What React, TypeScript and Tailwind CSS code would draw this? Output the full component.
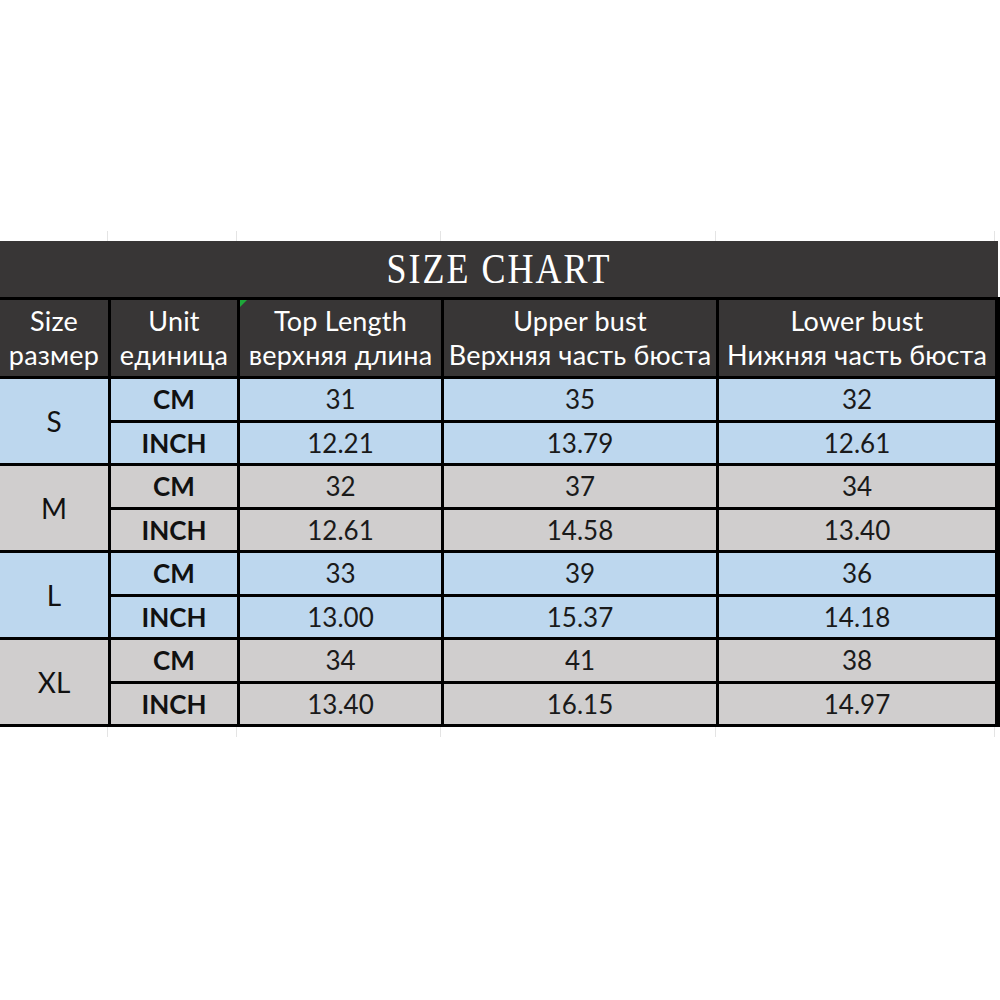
import React from 'react';

const sizes = [
  { size: 'S', bg: 'bg-[#bdd7ee]', cm: ['31', '35', '32'], inch: ['12.21', '13.79', '12.61'] },
  { size: 'M', bg: 'bg-[#d0cece]', cm: ['32', '37', '34'], inch: ['12.61', '14.58', '13.40'] },
  { size: 'L', bg: 'bg-[#bdd7ee]', cm: ['33', '39', '36'], inch: ['13.00', '15.37', '14.18'] },
  { size: 'XL', bg: 'bg-[#d0cece]', cm: ['34', '41', '38'], inch: ['13.40', '16.15', '14.97'] },
];

const headers = [
  ['Size', 'размер'],
  ['Unit', 'единица'],
  ['Top Length', 'верхняя длина'],
  ['Upper bust', 'Верхняя часть бюста'],
  ['Lower bust', 'Нижняя часть бюста'],
];

const cols = 'grid grid-cols-[108px_126px_201px_272px_276px] gap-x-[3px]';

export default function App() {
  return (
    <div className="w-[1000px] h-[1000px] bg-white font-['Lato','Liberation_Sans',sans-serif]">
      <div className="h-[231px]" />

      {/* faint sheet gridlines above */}
      <div className={`${cols} h-[10px] w-[998px]`}>
        {headers.map((_, i) => (
          <div key={i} className="border-r border-[#e4e4e4]" />
        ))}
      </div>

      <div className="w-[998px] bg-[#383636] h-[56px] flex items-center justify-center">
        <span className="font-['Liberation_Serif',serif] text-[36px] text-white tracking-[2px] leading-none scale-y-[1.15]">SIZE CHART</span>
      </div>

      <div className={`${cols} gap-y-[3px] bg-black w-[998px] pr-[3px] py-[3px] box-content`}>
        {headers.map((h, i) => (
          <div
            key={i}
            className="relative bg-[#383636] h-[76px] flex flex-col items-center justify-center text-white text-[27px] leading-[34px] whitespace-nowrap tracking-[0.2px]"
          >
            {i === 2 && (
              <span className="absolute left-0 top-0 w-0 h-0 border-t-[7px] border-t-[#1ea83a] border-r-[7px] border-r-transparent" />
            )}
            <span>{h[0]}</span>
            <span>{h[1]}</span>
          </div>
        ))}

        {sizes.map((s) => (
          <React.Fragment key={s.size}>
            <div className={`${s.bg} row-span-2 flex items-center justify-center text-[28px] text-[#111]`}>{s.size}</div>
            <div className={`${s.bg} h-[41px] flex items-center justify-center text-[26px] font-bold text-[#111]`}>CM</div>
            {s.cm.map((v, j) => (
              <div key={j} className={`${s.bg} h-[41px] flex items-center justify-center text-[26px] text-[#1a1a1a]`}>{v}</div>
            ))}
            <div className={`${s.bg} h-[40px] flex items-center justify-center text-[26px] font-bold text-[#111]`}>INCH</div>
            {s.inch.map((v, j) => (
              <div key={j} className={`${s.bg} h-[40px] flex items-center justify-center text-[26px] text-[#1a1a1a]`}>{v}</div>
            ))}
          </React.Fragment>
        ))}
      </div>

      {/* faint sheet gridlines below */}
      <div className={`${cols} h-[10px] w-[998px]`}>
        {headers.map((_, i) => (
          <div key={i} className="border-r border-[#e4e4e4]" />
        ))}
      </div>
    </div>
  );
}
